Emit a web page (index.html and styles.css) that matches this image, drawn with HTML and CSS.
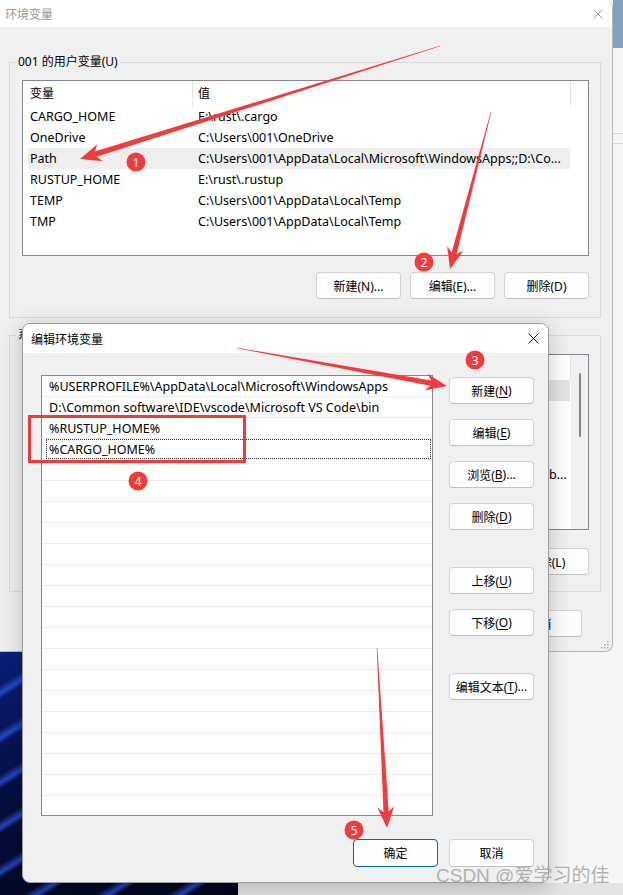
FILE: index.html
```html
<!DOCTYPE html>
<html lang="zh-CN">
<head>
<meta charset="utf-8">
<title>环境变量</title>
<link rel="stylesheet" href="styles.css">
</head>
<body>
<div class="desktop">
  <div class="win">
    <div class="win-title">
      <span class="win-title-text">环境变量</span>
      <svg class="xbtn" width="10" height="10" viewBox="0 0 10 10"><path d="M0.5 0.5L9.5 9.5M9.5 0.5L0.5 9.5" stroke="#9a9a9a" stroke-width="1"/></svg>
    </div>
    <div class="win-body">
      <div class="group">
        <div class="group-label">001 的用户变量(U)</div>
        <div class="listview">
          <div class="lv-head"><div class="h1">变量</div><div class="h2">值</div></div>
          <div class="lv-row"><div class="c1">CARGO_HOME</div><div class="c2">E:\rust\.cargo</div></div>
          <div class="lv-row"><div class="c1">OneDrive</div><div class="c2">C:\Users\001\OneDrive</div></div>
          <div class="lv-row sel"><div class="c1">Path</div><div class="c2">C:\Users\001\AppData\Local\Microsoft\WindowsApps;;D:\Co...</div></div>
          <div class="lv-row"><div class="c1">RUSTUP_HOME</div><div class="c2">E:\rust\.rustup</div></div>
          <div class="lv-row"><div class="c1">TEMP</div><div class="c2">C:\Users\001\AppData\Local\Temp</div></div>
          <div class="lv-row"><div class="c1">TMP</div><div class="c2">C:\Users\001\AppData\Local\Temp</div></div>
        </div>
        <div class="btnrow">
          <button class="btn">新建(N)...</button>
          <button class="btn">编辑(E)...</button>
          <button class="btn">删除(D)</button>
        </div>
      </div>
      <div class="group sys">
        <div class="group-label">系统变量(S)</div>
        <div class="listview sysview">
          <div class="sys-main">
            <div class="lv-head"><div class="h1">变量</div><div class="h2">值</div></div>
            <div class="lv-row sel2"><div class="c1">ComSpec</div><div class="c2"></div></div>
            <div class="lv-row"><div class="c1">DriverData</div><div class="c2"></div></div>
            <div class="lv-row"><div class="c1">NUMBER_OF_PROC</div><div class="c2"></div></div>
            <div class="lv-row"><div class="c1">OS</div><div class="c2"></div></div>
            <div class="lv-row"><div class="c1">Path</div><div class="c2 tail">b...</div></div>
            <div class="lv-row"><div class="c1">PATHEXT</div><div class="c2"></div></div>
            <div class="lv-row"><div class="c1">PROCESSOR</div><div class="c2"></div></div>
          </div>
          <div class="vscroll"><div class="thumb"></div></div>
        </div>
        <div class="btnrow sysbtns">
          <button class="btn">新建(W)...</button>
          <button class="btn">编辑(I)...</button>
          <button class="btn">删除(L)</button>
        </div>
      </div>
      <div class="btnrow winfoot">
        <button class="btn">确定</button>
        <button class="btn">取消</button>
      </div>
    </div>
    <svg class="grip" width="9" height="9" viewBox="0 0 9 9">
      <rect x="7" y="1" width="1.5" height="1.5" fill="#b0b0b0"/>
      <rect x="4" y="4" width="1.5" height="1.5" fill="#b0b0b0"/>
      <rect x="7" y="4" width="1.5" height="1.5" fill="#b0b0b0"/>
      <rect x="1" y="7" width="1.5" height="1.5" fill="#b0b0b0"/>
      <rect x="4" y="7" width="1.5" height="1.5" fill="#b0b0b0"/>
      <rect x="7" y="7" width="1.5" height="1.5" fill="#b0b0b0"/>
    </svg>
  </div>

  <div class="dialog">
    <div class="dlg-title">
      <span>编辑环境变量</span>
      <svg class="xbtn" width="11" height="11" viewBox="0 0 11 11"><path d="M0.5 0.5L10.5 10.5M10.5 0.5L0.5 10.5" stroke="#1a1a1a" stroke-width="1"/></svg>
    </div>
    <div class="dlg-body">
      <div class="dlg-list">
        <div class="item"><span>%USERPROFILE%\AppData\Local\Microsoft\WindowsApps</span></div>
        <div class="item"><span>D:\Common software\IDE\vscode\Microsoft VS Code\bin</span></div>
        <div class="item"><span>%RUSTUP_HOME%</span></div>
        <div class="item focus"><span>%CARGO_HOME%</span></div>
        <div class="item"><span></span></div>
        <div class="item"><span></span></div>
        <div class="item"><span></span></div>
        <div class="item"><span></span></div>
        <div class="item"><span></span></div>
        <div class="item"><span></span></div>
        <div class="item"><span></span></div>
        <div class="item"><span></span></div>
        <div class="item"><span></span></div>
        <div class="item"><span></span></div>
        <div class="item"><span></span></div>
        <div class="item"><span></span></div>
        <div class="item"><span></span></div>
        <div class="item"><span></span></div>
        <div class="item"><span></span></div>
        <div class="item"><span></span></div>
        <div class="item"><span></span></div>
        <div class="item"><span></span></div>
      </div>
      <div class="dlg-side">
        <button class="btn">新建(<u>N</u>)</button>
        <button class="btn">编辑(<u>E</u>)</button>
        <button class="btn">浏览(<u>B</u>)...</button>
        <button class="btn">删除(<u>D</u>)</button>
        <button class="btn spaced">上移(<u>U</u>)</button>
        <button class="btn">下移(<u>O</u>)</button>
        <button class="btn spaced">编辑文本(<u>T</u>)...</button>
      </div>
    </div>
    <div class="dlg-foot">
      <button class="btn tall primary">确定</button>
      <button class="btn tall">取消</button>
    </div>
  </div>

  <svg class="annot" width="623" height="895" viewBox="0 0 623 895">
    <g fill="#f23b3b">
      <g transform="translate(440 46) rotate(162.57)">
        <polygon points="0,-0.3 361,-2.8 356,-9 377.3,0 356,9 361,2.8 0,0.3"/>
      </g>
      <g transform="translate(491 112) rotate(104.64)">
        <polygon points="0,-0.3 146,-2.6 141,-8.5 162.3,0 141,8.5 146,2.6 0,0.3"/>
      </g>
      <g transform="translate(237 348) rotate(10.26)">
        <polygon points="0,-0.3 197,-2.6 192,-8.5 213.4,0 192,8.5 197,2.6 0,0.3"/>
      </g>
      <g transform="translate(377 648) rotate(86.82)">
        <polygon points="0,-0.3 164,-2.6 159,-8.5 180.3,0 159,8.5 164,2.6 0,0.3"/>
      </g>
    </g>
    <rect x="29.5" y="416.5" width="215" height="45" fill="none" stroke="#ef3a3a" stroke-width="3"/>
    <g class="badges">
      <circle cx="136" cy="162" r="9.5" fill="#f23b3b"/>
      <text x="136" y="166.5">1</text>
      <circle cx="424" cy="262" r="9.5" fill="#f23b3b"/>
      <text x="424" y="266.5">2</text>
      <circle cx="475" cy="360" r="9.5" fill="#f23b3b"/>
      <text x="475" y="364.5">3</text>
      <circle cx="138" cy="481" r="9.5" fill="#f23b3b"/>
      <text x="138" y="485.5">4</text>
      <circle cx="354" cy="830" r="9.5" fill="#f23b3b"/>
      <text x="354" y="834.5">5</text>
    </g>
  </svg>

  <div class="watermark">CSDN @爱学习的佳</div>
</div>
</body>
</html>
```

FILE: styles.css
```css
* { box-sizing: border-box; }
html, body { margin: 0; padding: 0; }
body {
  width: 623px;
  height: 895px;
  overflow: hidden;
  font-family: "Noto Sans", "Noto Sans CJK SC", sans-serif;
  font-size: 12px;
  color: #000;
}
.desktop {
  position: relative;
  width: 623px;
  height: 895px;
  background:
    linear-gradient(#86a3be, #86a3be) 613px 0 / 10px 48px no-repeat,
    linear-gradient(#d8d8d8, #d8d8d8) 613px 133px / 10px 1px no-repeat,
    linear-gradient(#d8d8d8, #d8d8d8) 613px 143px / 10px 1px no-repeat,
    repeating-linear-gradient(-32deg, rgba(40, 80, 230, 0) 0px, rgba(40, 80, 230, 0) 26px, rgba(45, 90, 235, 0.75) 31px, rgba(40, 80, 230, 0) 38px) 0 652px / 238px 243px no-repeat,
    linear-gradient(170deg, #0c1f78 0%, #071047 45%, #03061c 100%) 0 652px / 238px 243px no-repeat,
    linear-gradient(#e3e3e3, #e3e3e3) 0 883px / 623px 12px no-repeat,
    #f6f6f6;
}

/* background window */
.win {
  position: absolute;
  left: 0;
  top: 0;
  width: 613px;
  height: 652px;
  background: #f0f0f0;
  border-right: 1px solid #b9b9b9;
  border-bottom: 1px solid #b9b9b9;
  border-radius: 0 8px 8px 0;
  overflow: hidden;
}
.win-title {
  height: 27px;
  background: #fff;
  display: flex;
  align-items: center;
  justify-content: space-between;
  padding: 0 9px 0 5px;
  color: #9b9b9b;
}
.xbtn { display: block; }
.win-body { padding: 35px 0 0 9px; }
.group {
  width: 592px;
  border: 1px solid #dcdcdc;
  padding: 0 11px 18px 12px;
  height: 256px;
}
.group-label {
  width: fit-content;
  margin: -9px 0 0 -6px;
  padding: 0 2px;
  line-height: 16px;
  background: #f0f0f0;
}
.listview {
  margin-top: 10px;
  height: 176px;
  background: #fff;
  border: 1px solid #828790;
  overflow: hidden;
  font-size: 12.5px;
}
.lv-head { display: flex; height: 25px; line-height: 25px; font-size: 12px; }
.lv-head .h1 { width: 170px; padding-left: 7px; border-right: 1px solid #e5e5e5; }
.lv-head .h2 { width: 378px; padding-left: 5px; border-right: 1px solid #e5e5e5; }
.lv-row {
  display: flex;
  width: 542px;
  height: 21px;
  line-height: 21px;
  margin-left: 5px;
  white-space: nowrap;
}
.lv-row .c1 { width: 164px; padding-left: 2px; overflow: hidden; }
.lv-row .c2 { flex: 1; padding-left: 6px; overflow: hidden; }
.lv-row .c2.tail { padding-left: 357px; }
.lv-row.sel { background: #efefef; }
.lv-row.sel2 { background: #e4e4e4; }
.btnrow { display: flex; justify-content: flex-end; gap: 9px; margin-top: 16px; }
.btn {
  width: 85px;
  height: 27px;
  padding: 0;
  font-family: "Noto Sans", "Noto Sans CJK SC", sans-serif;
  font-size: 12px;
  color: #000;
  background: #fdfdfd;
  border: 1px solid #d3d3d3;
  border-bottom-color: #c2c2c2;
  border-radius: 4px;
  display: flex;
  align-items: center;
  justify-content: center;
}
.btn u { text-underline-offset: 2px; }
.group.sys { margin-top: 17px; height: 257px; padding-bottom: 15px; }
.sysview { margin-top: 11px; display: flex; }
.sys-main { width: 548px; }
.sysview .lv-row { width: 542px; }
.vscroll {
  width: 17px;
  background: #f0f0f0;
  display: flex;
  justify-content: center;
  padding-top: 18px;
}
.thumb { width: 2px; height: 64px; background: #858585; border-radius: 1px; }
.sysbtns { margin-top: 18px; }
.winfoot { margin-top: 18px; padding-right: 30px; }
.grip { position: absolute; right: 3px; bottom: 2px; }

/* edit dialog */
.dialog {
  position: absolute;
  left: 22px;
  top: 323px;
  width: 527px;
  height: 560px;
  background: #f0f0f0;
  border: 1px solid #9c9c9c;
  border-radius: 8px;
  box-shadow: 0 4px 22px rgba(0, 0, 0, 0.22);
  overflow: hidden;
}
.dlg-title {
  height: 29px;
  background: #fff;
  display: flex;
  align-items: center;
  justify-content: space-between;
  padding: 0 9px 0 8px;
}
.dlg-body {
  display: grid;
  grid-template-columns: 392px 85px;
  column-gap: 16px;
  padding: 22px 14px 0 18px;
}
.dlg-list {
  height: 441px;
  background: #fff;
  border: 1px solid #828790;
  overflow: hidden;
  font-size: 12.5px;
}
.item {
  height: 21px;
  border-bottom: 1px solid #ebebeb;
  padding: 0 1px 0 4px;
}
.item span {
  display: block;
  height: 20px;
  line-height: 20px;
  padding-left: 2px;
  border: 1px solid transparent;
  white-space: nowrap;
}
.item.focus span { border: 1px dotted #333; }
.dlg-side {
  display: flex;
  flex-direction: column;
  gap: 15px;
  padding-top: 2px;
}
.dlg-side .spaced { margin-top: 22px; }
.dlg-foot {
  display: flex;
  justify-content: flex-end;
  gap: 11px;
  padding: 23px 14px 0 0;
}
.btn.tall { height: 28px; }
.btn.primary { border: 1px solid #0067c0; }

/* annotations */
.annot {
  position: absolute;
  left: 0;
  top: 0;
  pointer-events: none;
}
.badges text {
  fill: #fff;
  font-family: "Noto Sans", sans-serif;
  font-size: 12.5px;
  text-anchor: middle;
}
.watermark {
  position: absolute;
  left: 436px;
  top: 864px;
  font-family: "Liberation Sans", "Noto Sans CJK SC", sans-serif;
  font-size: 19px;
  line-height: 24px;
  color: rgba(165, 165, 165, 0.85);
  white-space: nowrap;
  pointer-events: none;
}
```
